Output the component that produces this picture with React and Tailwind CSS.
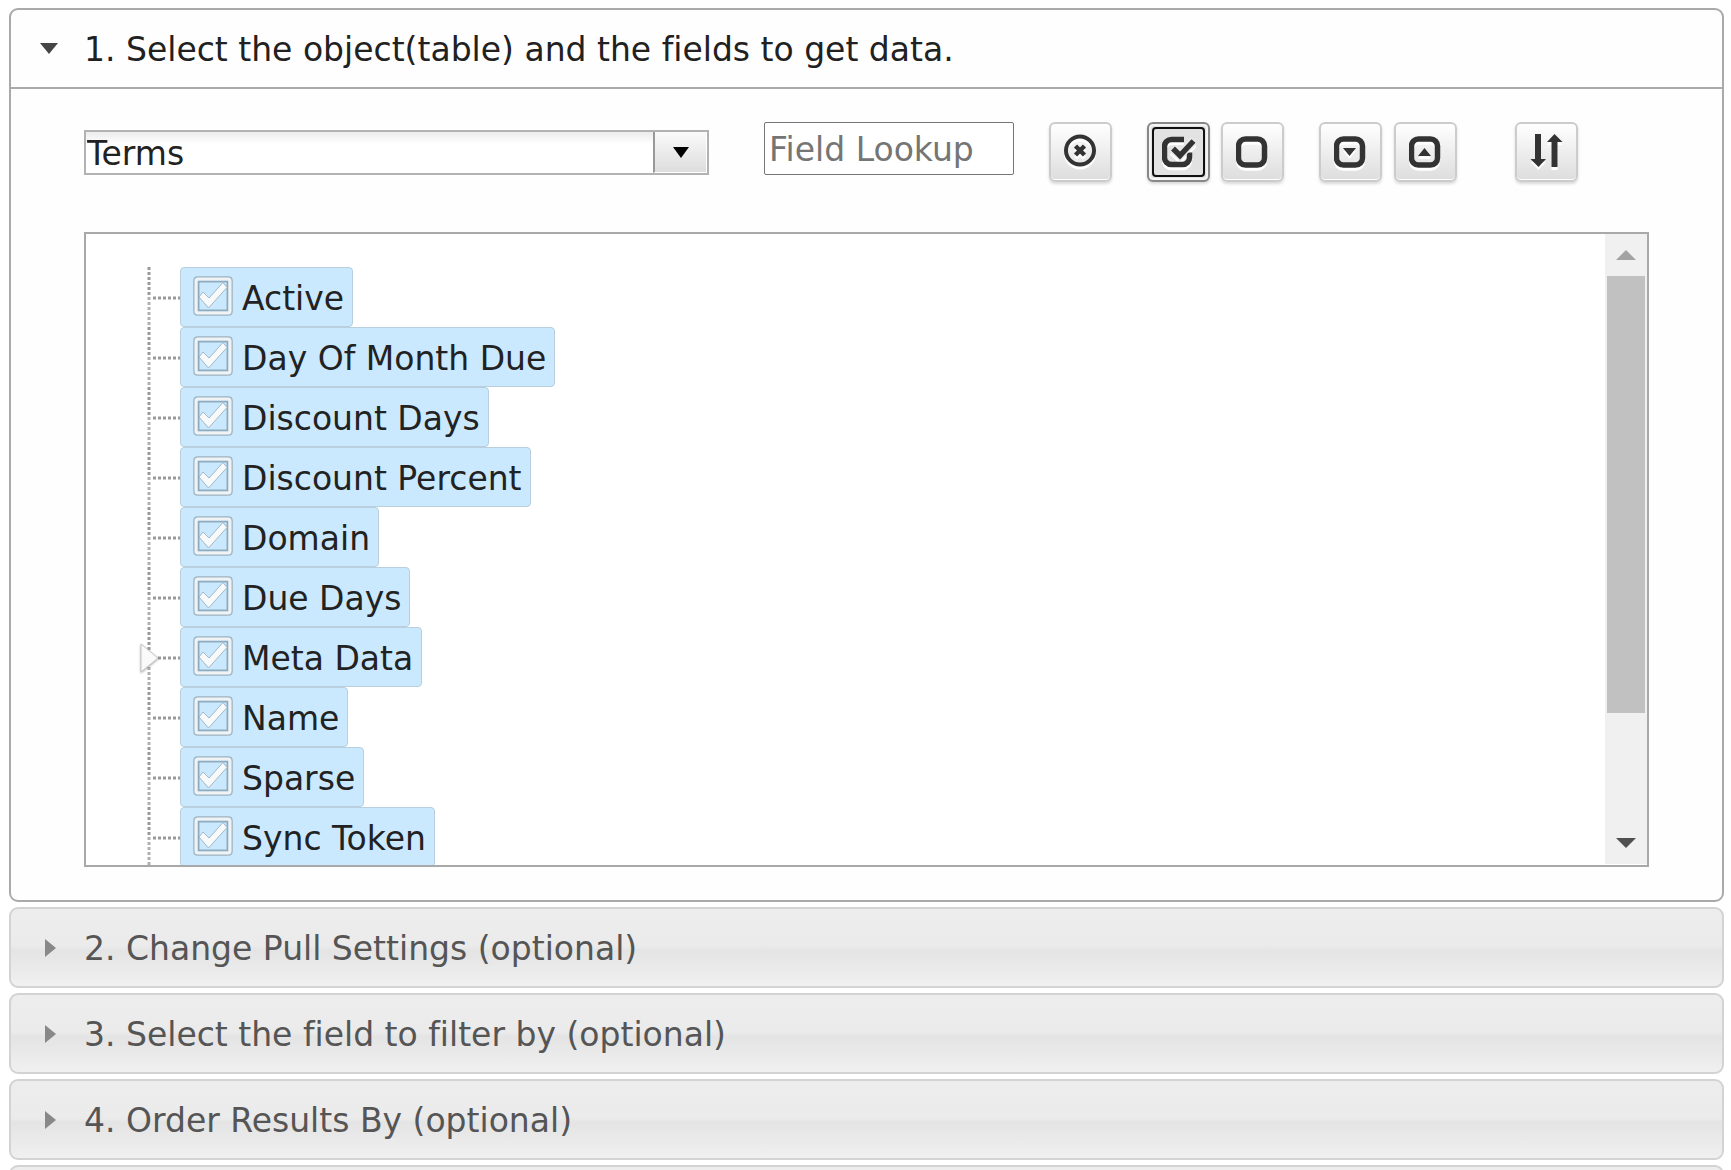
import React, { useState } from 'react'

const FIELDS = [
  { name: 'Active' },
  { name: 'Day Of Month Due' },
  { name: 'Discount Days' },
  { name: 'Discount Percent' },
  { name: 'Domain' },
  { name: 'Due Days' },
  { name: 'Meta Data', expandable: true },
  { name: 'Name' },
  { name: 'Sparse' },
  { name: 'Sync Token' },
]

const CLOSED_SECTIONS = [
  '2. Change Pull Settings (optional)',
  '3. Select the field to filter by (optional)',
  '4. Order Results By (optional)',
]

function ToolButton({ label, active, children }) {
  const look = active
    ? 'border-[#888888] bg-[#e2e2e2] shadow-[inset_0_0_0_2px_#f4f4f4,0_2px_3px_rgba(0,0,0,0.15)]'
    : 'border-[#cccccc] bg-linear-to-b from-white to-[#dddddd] shadow-[inset_0_-1px_0_#fff,0_2px_3px_rgba(0,0,0,0.15)]'
  return (
    <button type="button" aria-label={label} title={label} className={`flex h-[60px] w-[63px] shrink-0 items-center justify-center rounded-[6px] border-2 ${look}`}>
      <span className={active ? 'flex h-[50px] w-[53px] items-center justify-center rounded-[4px] border-2 border-[#101010]' : 'flex items-center justify-center'}>
        <svg viewBox="0 0 34 36" className="h-[36px] w-[34px] fill-none stroke-[#333333] drop-shadow-[0_3px_0_#fff]">
          {children}
        </svg>
      </span>
    </button>
  )
}

function Toolbar() {
  return (
    <div className="flex items-start">
      <div className="flex shrink-0 items-end gap-[55px]">
        <div className="relative w-[625px]">
          <select
            aria-label="Object"
            className="block h-[45px] w-full appearance-none border-2 border-[#b2b2b2] bg-linear-to-b from-[#ececec] to-white to-30% pt-[2px] pl-px text-[33px] leading-[39px] text-[#222222]"
          >
            <option>Terms</option>
          </select>
          <span className="pointer-events-none absolute inset-y-[2px] right-[2px] flex w-[54px] items-center justify-center border-r border-b border-l-2 border-r-white border-b-white border-l-[#999999] bg-linear-to-b from-[#fafafa] to-[#dddddd]">
            <svg viewBox="0 0 18 12" className="h-[12px] w-[18px]">
              <path d="M1 1h16L9 12z" fill="#000" />
            </svg>
          </span>
        </div>
        <input
          type="text"
          aria-label="Field Lookup"
          placeholder="Field Lookup"
          className="h-[53px] w-[250px] rounded-[2px] border border-[#767676] bg-white px-[4px] pt-[2px] text-[33px] placeholder:text-[#757575]"
        />
      </div>
      <div className="ml-[35px] flex gap-[35px]">
        <ToolButton label="Clear lookup">
          <circle cx="16" cy="16.500" r="14" strokeWidth="4" />
          <path d="M11.500 12l9 9M20.500 12l-9 9" strokeWidth="4.500" />
        </ToolButton>
        <div className="flex gap-[11px]">
          <ToolButton label="Select all" active>
            <path d="M22 5.500H9.500a7 7 0 0 0-7 7v11a7 7 0 0 0 7 7h11a7 7 0 0 0 7-7v-5" strokeWidth="5.500" />
            <path d="M11 14l7 7L32 6" stroke="#e8e8e8" strokeWidth="9" />
            <path d="M11 14.500l7 7L31.500 7" strokeWidth="5.500" />
          </ToolButton>
          <ToolButton label="Select none">
            <rect x="2.500" y="5" width="26" height="26" rx="7" strokeWidth="5.500" />
          </ToolButton>
        </div>
        <div className="flex gap-[12px]">
          <ToolButton label="Expand all">
            <rect x="2.500" y="5" width="26" height="26" rx="7" strokeWidth="5.500" />
            <path d="M9 14h13l-6.500 8z" fill="#333" stroke="none" />
          </ToolButton>
          <ToolButton label="Collapse all">
            <rect x="2.500" y="5" width="26" height="26" rx="7" strokeWidth="5.500" />
            <path d="M9 22h13l-6.500-8z" fill="#333" stroke="none" />
          </ToolButton>
        </div>
      </div>
      <div className="ml-[58px]">
        <ToolButton label="Sort fields">
          <path d="M5 0h6v25h5l-7.500 8L.500 25H5zM21.500 33h6V8h5L24.500 0 17 8h4.500z" fill="#333" stroke="none" />
        </ToolButton>
      </div>
    </div>
  )
}

function FieldRow({ name, expandable }) {
  const [checked, setChecked] = useState(true)
  return (
    <li className="relative flex h-[60px] items-center">
      <svg aria-hidden="true" className="h-[60px] w-[33px] shrink-0" viewBox="0 0 33 60">
        <path d="M2 0v30" stroke="#999" strokeWidth="3" strokeDasharray="3 2" />
        <path d="M2 30v30" stroke="#b0b0b0" strokeWidth="3" strokeDasharray="3 2" />
        <path d="M6 31h27" stroke="#999" strokeWidth="3" strokeDasharray="3 2" />
      </svg>
      {expandable && (
        <button type="button" aria-label={`Expand ${name}`} className="absolute top-[15px] -left-[7px]">
          <svg viewBox="0 0 20 32" className="h-[32px] w-[20px] drop-shadow-[0_1px_1px_rgba(0,0,0,0.3)]">
            <path d="M1 2l17 14L1 30z" fill="#fafafa" stroke="#c4c4c4" />
          </svg>
        </button>
      )}
      <label className="flex h-[60px] items-center gap-[8px] rounded-[4px] border border-[#b9cfdd] bg-[#cae9fe] pr-[8px] pl-[11px] whitespace-nowrap">
        <span className="relative flex h-[42px] w-[42px] items-start">
          <input
            type="checkbox"
            checked={checked}
            onChange={(e) => setChecked(e.target.checked)}
            className="h-[40px] w-[42px] appearance-none"
          />
          <svg viewBox="0 0 42 42" className="pointer-events-none absolute inset-0">
            <rect x="1.500" y=".5" width="39" height="39" rx="4" fill="none" stroke="#b4cad8" strokeWidth="1" />
            <rect x="2.500" y="1.500" width="37" height="37" rx="3" fill="none" stroke="#9db4c3" strokeWidth="2" />
            <rect x="6.500" y="5.500" width="29" height="29" fill="none" stroke="#8fabbd" strokeWidth="2" />
            <rect x="4" y="3" width="34" height="34" rx="2" fill="none" stroke="#f0f3f5" strokeWidth="3" />
            {checked && (
              <path d="M7 21l4-5 6 6L31 6.500l4 5L16.500 32z" fill="#f8f9fa" stroke="#9fb8c8" strokeWidth="1" />
            )}
          </svg>
        </span>
        <span className="pt-[4px] text-[33px] leading-[40px] text-[#222222]">{name}</span>
      </label>
    </li>
  )
}

function FieldTree() {
  return (
    <div className="mt-[50px] flex h-[635px] border-2 border-[#a9a9a9] bg-white">
      <div className="min-w-0 flex-1 overflow-y-auto pt-[33px] pl-[61px] [scrollbar-width:none]">
        <ul>
          {FIELDS.map((f) => (
            <FieldRow key={f.name} name={f.name} expandable={f.expandable} />
          ))}
        </ul>
      </div>
      <div className="mb-px flex w-[42px] shrink-0 flex-col bg-[#f0f0f0]">
        <button type="button" aria-label="Scroll up" className="flex h-[42px] items-center justify-center">
          <svg viewBox="0 0 20 10" className="h-[10px] w-[20px]">
            <path d="M0 10L10 0l10 10z" fill="#a3a3a3" />
          </svg>
        </button>
        <div className="flex-1 px-[2px]">
          <div className="h-4/5 bg-[#c1c1c1]" />
        </div>
        <button type="button" aria-label="Scroll down" className="flex h-[42px] items-center justify-center">
          <svg viewBox="0 0 20 10" className="h-[10px] w-[20px]">
            <path d="M0 0l10 10L20 0z" fill="#505050" />
          </svg>
        </button>
      </div>
    </div>
  )
}

function ClosedSection({ title }) {
  return (
    <h3>
      <button
        type="button"
        aria-label={title ? undefined : 'More options'}
        className="flex h-[81px] w-full items-center rounded-[9px] border-2 border-[#d3d3d3] bg-[linear-gradient(#ededed,#ebebeb_48%,#e4e4e4_54%,#f0f0f0)] text-left text-[33px] text-[#555555]"
      >
        <span className="flex w-[73px] shrink-0 pl-[34px]">
          <svg viewBox="0 0 12 20" className="h-[20px] w-[12px]">
            <path d="M0 1l11 9L0 19z" fill="#888" />
          </svg>
        </span>
        <span className="pt-[3px]">{title}</span>
      </button>
    </h3>
  )
}

export default function App() {
  return (
    <main className="flex h-screen flex-col gap-[5px] overflow-hidden bg-white pt-[8px] pr-[7px] pl-[9px] font-['DejaVu_Sans',Verdana,sans-serif] [font-variant-ligatures:none]">
      <section className="shrink-0 rounded-[9px] border-2 border-[#aaaaaa] bg-[#fefefe]">
        <h3 className="border-b-2 border-[#aaaaaa]">
          <button type="button" aria-expanded="true" className="flex h-[77px] w-full items-center text-left text-[33px] text-[#212121]">
            <span className="flex w-[73px] shrink-0 pl-[29px]">
              <svg viewBox="0 0 18 12" className="h-[12px] w-[18px]">
                <path d="M0 0h18L9 11z" fill="#454545" />
              </svg>
            </span>
            <span className="pt-[3px]">1. Select the object(table) and the fields to get data.</span>
          </button>
        </h3>
        <div className="px-[73px] pt-[33px] pb-[33px]">
          <Toolbar />
          <FieldTree />
        </div>
      </section>
      {CLOSED_SECTIONS.map((title) => (
        <ClosedSection key={title} title={title} />
      ))}
      <ClosedSection />
    </main>
  )
}
